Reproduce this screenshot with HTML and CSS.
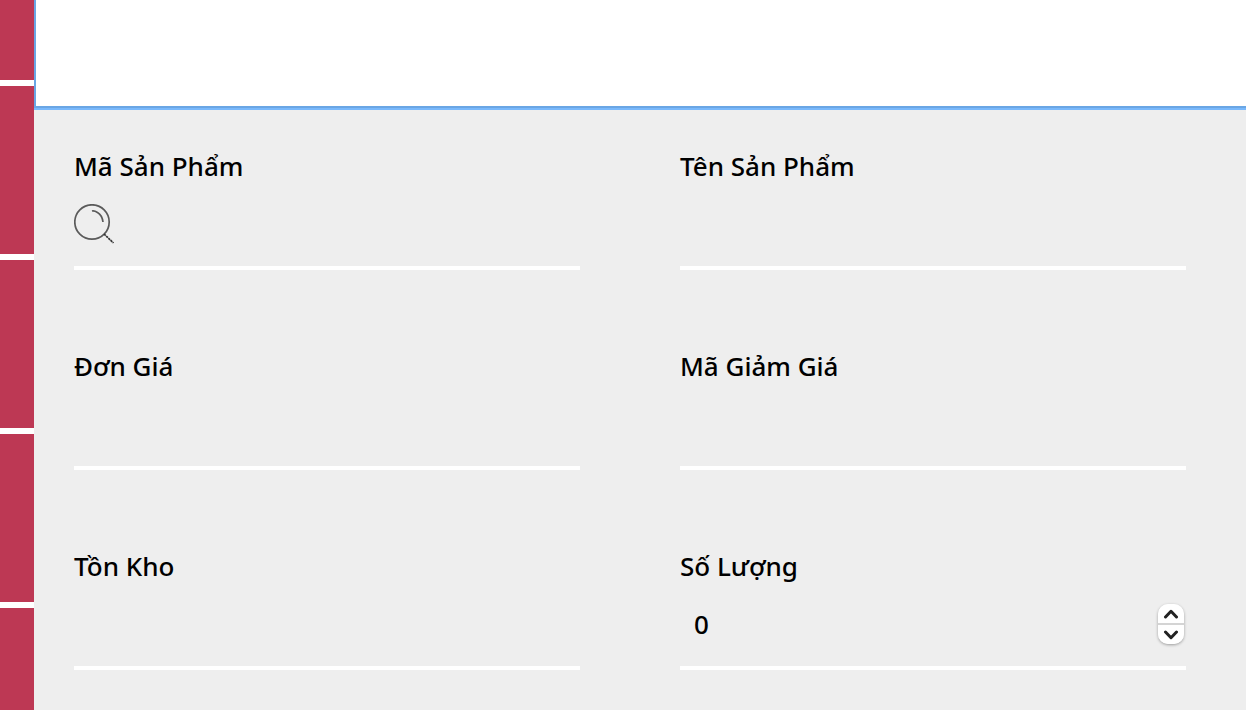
FILE: index.html
```html
<!DOCTYPE html>
<html lang="vi">
<head>
<meta charset="utf-8">
<title>Sản Phẩm</title>
<link rel="stylesheet" href="styles.css">
</head>
<body>
<div class="app">
  <nav class="sidebar" aria-label="Menu">
    <div class="tile tile-first"></div>
    <div class="tile"></div>
    <div class="tile"></div>
    <div class="tile"></div>
    <div class="tile"></div>
  </nav>
  <main class="content">
    <section class="list"></section>
    <form class="form">
      <div class="field">
        <label class="label" for="code">Mã Sản Phẩm</label>
        <div class="control">
          <button class="search" type="button" aria-label="Tìm">
            <svg class="search-icon" viewBox="0 0 40 40" fill="none" stroke="#5a5a5a" stroke-width="1.7">
              <circle cx="18" cy="18" r="17.2"/>
              <path d="M18 7C20 6.500 22 7.500 23.500 8.500C27 10.500 28.500 14 29 18"/>
              <path d="M30 30L39.500 39" stroke="#333" stroke-dasharray="2.400 .6"/>
            </svg>
          </button>
          <input class="input" id="code" type="text">
        </div>
      </div>
      <div class="field">
        <label class="label" for="name">Tên Sản Phẩm</label>
        <div class="control"><input class="input" id="name" type="text"></div>
      </div>
      <div class="field">
        <label class="label" for="price">Đơn Giá</label>
        <div class="control"><input class="input" id="price" type="text"></div>
      </div>
      <div class="field">
        <label class="label" for="discount">Mã Giảm Giá</label>
        <div class="control"><input class="input" id="discount" type="text"></div>
      </div>
      <div class="field">
        <label class="label" for="stock">Tồn Kho</label>
        <div class="control"><input class="input" id="stock" type="text"></div>
      </div>
      <div class="field">
        <label class="label" for="quantity">Số Lượng</label>
        <div class="control">
          <input class="input input-number" id="quantity" type="text" inputmode="numeric" value="0">
          <div class="stepper">
            <button class="step step-up" type="button" aria-label="Tăng">
              <svg class="chevron" viewBox="0 0 16 10"><path d="M2.500 8L8 2.300L13.500 8"/></svg>
            </button>
            <button class="step step-down" type="button" aria-label="Giảm">
              <svg class="chevron" viewBox="0 0 16 10"><path d="M2.500 2L8 7.700L13.500 2"/></svg>
            </button>
          </div>
        </div>
      </div>
    </form>
  </main>
</div>
</body>
</html>
```
FILE: styles.css
```css
* {
  box-sizing: border-box;
}

body {
  margin: 0;
  background: #eeeeee;
  color: #000;
  font-family: "Noto Sans", "Open Sans", sans-serif;
  font-size: 26px;
  font-weight: 500;
}

.app {
  display: flex;
  height: 100vh;
  overflow: hidden;
}

.sidebar {
  display: flex;
  flex: none;
  flex-direction: column;
  gap: 6px;
  width: 34px;
  background: #fff;
}

.tile {
  flex: none;
  height: 168px;
  background: #bd3854;
}

.tile-first {
  height: 80px;
}

.content {
  flex: 1;
  min-width: 0;
}

.list {
  height: 108px;
  border-left: 2px solid #6aa6e4;
  border-bottom: 2px solid #6aa6e4;
  background: #fff;
  box-shadow: 0 2px 0 #79b8fb;
}

.form {
  display: grid;
  grid-template-columns: 1fr 1fr;
  gap: 80px 100px;
  padding: 42px 60px 40px 40px;
}

.field {
  display: flex;
  flex-direction: column;
  gap: 8px;
  min-width: 0;
}

.label {
  line-height: 32px;
}

.control {
  display: flex;
  align-items: center;
  height: 80px;
  padding-bottom: 8px;
  border-bottom: 4px solid #fff;
}

.input {
  flex: 1;
  min-width: 0;
  height: 40px;
  padding: 0;
  border: 0;
  outline: 0;
  background: transparent;
  color: inherit;
  font: inherit;
}

.input-number {
  padding-left: 14px;
}

.search {
  width: 40px;
  height: 40px;
  padding: 0;
  border: 0;
  background: transparent;
}

.search-icon {
  display: block;
  width: 40px;
  height: 40px;
}

.stepper {
  display: flex;
  flex-direction: column;
  width: 26px;
  height: 40px;
  margin-right: 2px;
  border-radius: 10px;
  box-shadow: 0 1px 3px rgba(0, 0, 0, 0.35);
}

.step {
  display: flex;
  flex: 1;
  align-items: center;
  justify-content: center;
  padding: 0;
  border: 0;
  background: #fff;
}

.step-up {
  border-bottom: 2px solid #d4d4d4;
  border-radius: 10px 10px 0 0;
}

.step-down {
  border-radius: 0 0 10px 10px;
}

.chevron {
  width: 16px;
  height: 10px;
  fill: none;
  stroke: #222;
  stroke-width: 3;
  stroke-linecap: round;
  stroke-linejoin: round;
}
```
